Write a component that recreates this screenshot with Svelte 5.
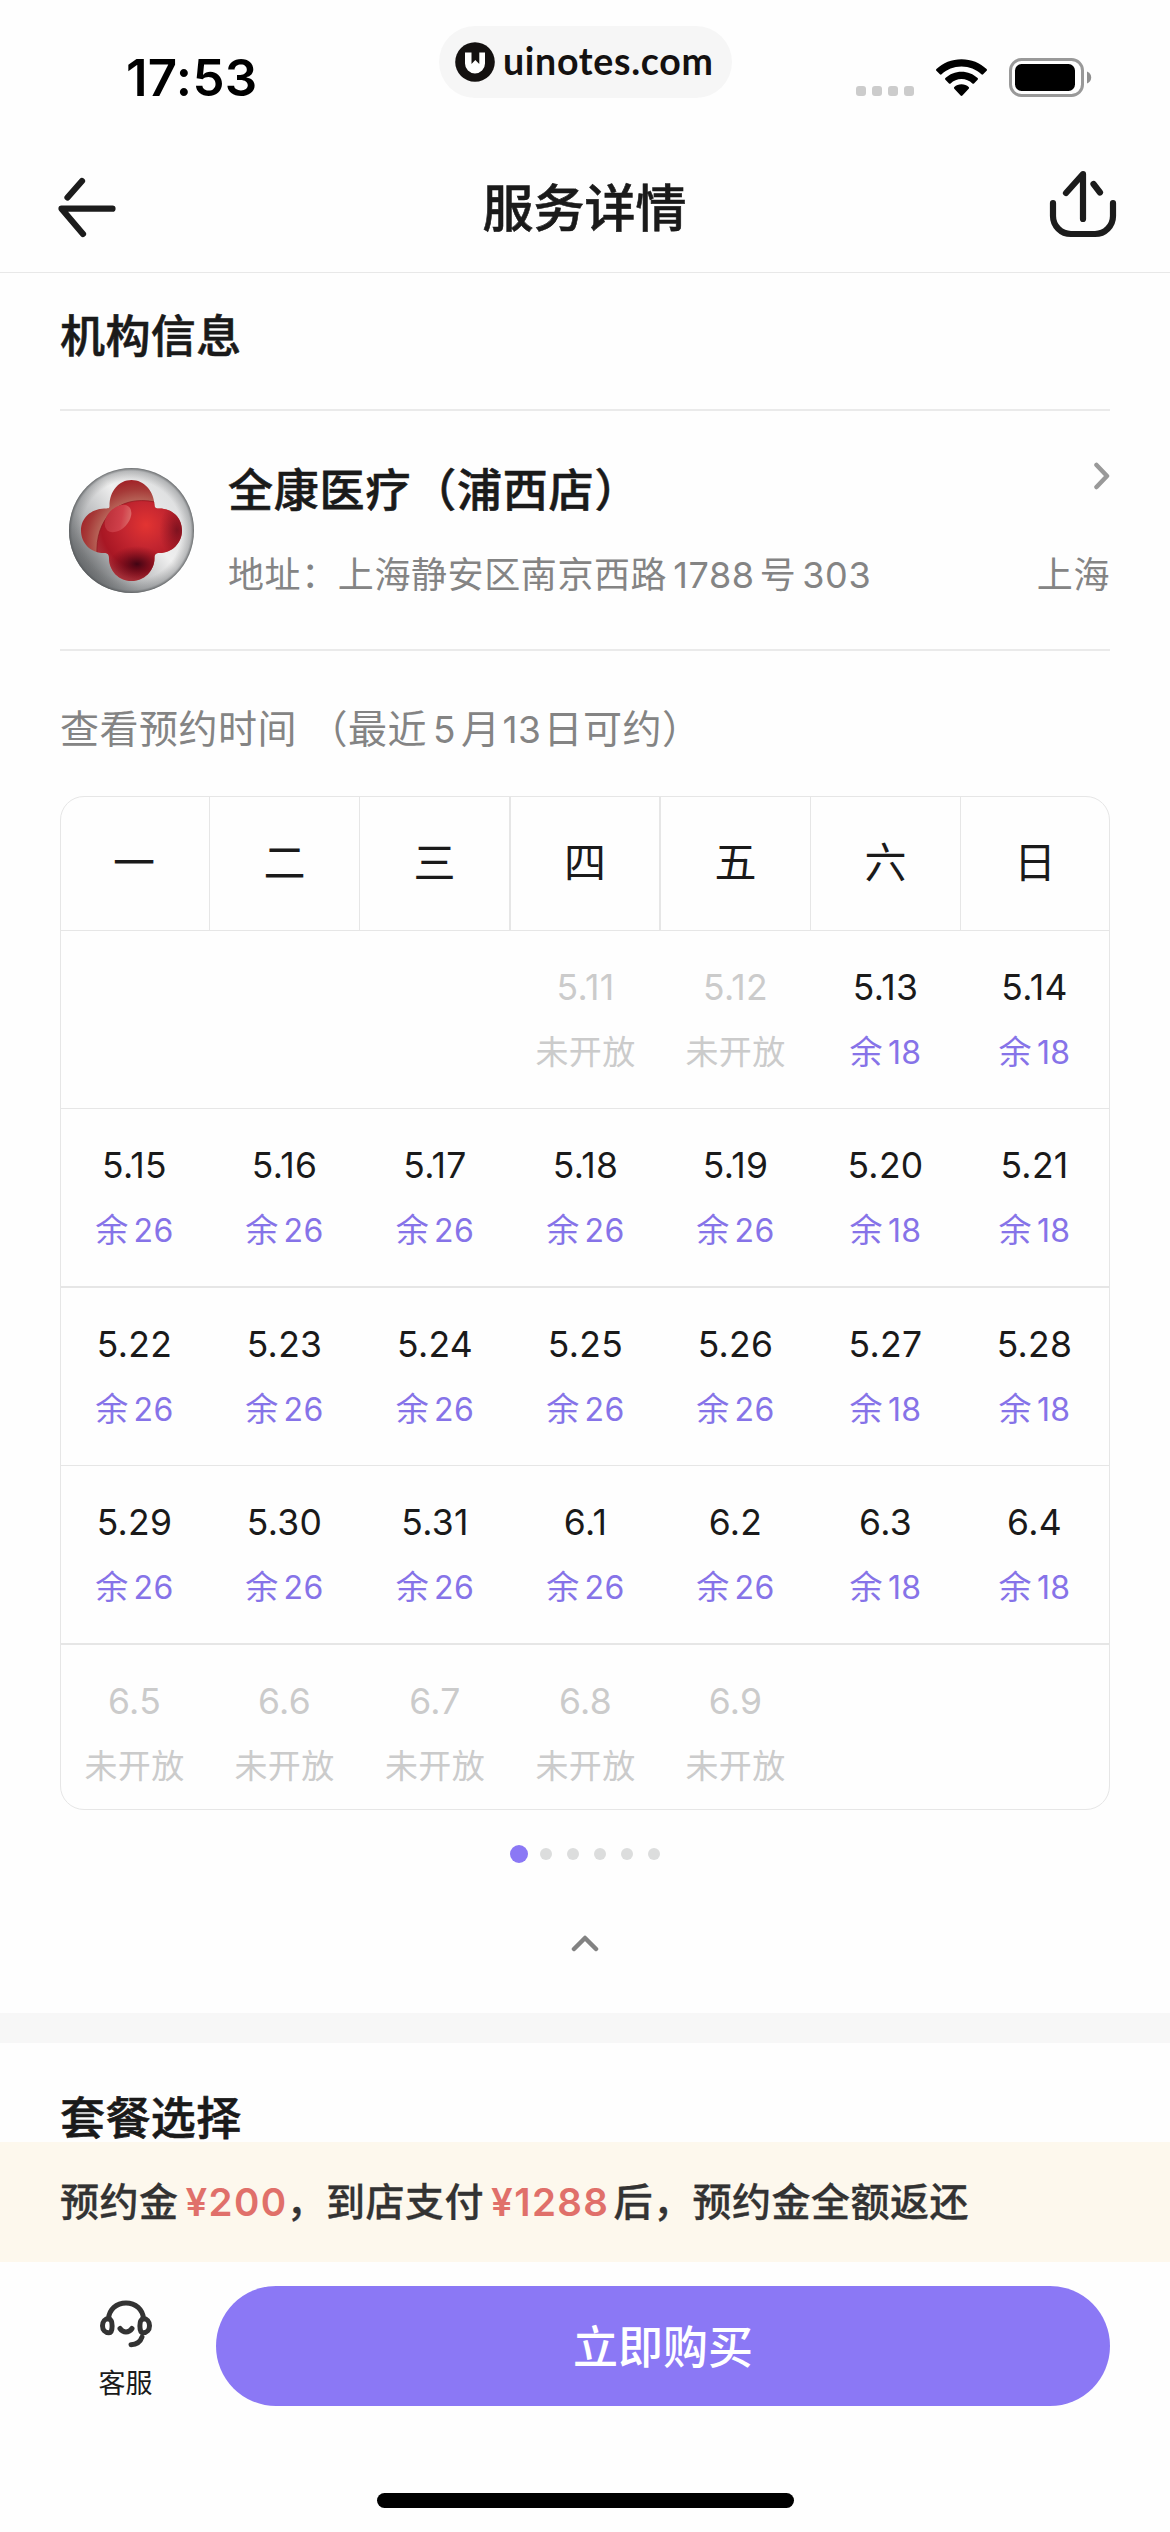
<script>
  const weekdays = ['一', '二', '三', '四', '五', '六', '日'];

  const closed = (date) => ({ date, left: null });
  const open = (date, left) => ({ date, left });

  const weeks = [
    [null, null, null, closed('5.11'), closed('5.12'), open('5.13', 18), open('5.14', 18)],
    [open('5.15', 26), open('5.16', 26), open('5.17', 26), open('5.18', 26), open('5.19', 26), open('5.20', 18), open('5.21', 18)],
    [open('5.22', 26), open('5.23', 26), open('5.24', 26), open('5.25', 26), open('5.26', 26), open('5.27', 18), open('5.28', 18)],
    [open('5.29', 26), open('5.30', 26), open('5.31', 26), open('6.1', 26), open('6.2', 26), open('6.3', 18), open('6.4', 18)],
    [closed('6.5'), closed('6.6'), closed('6.7'), closed('6.8'), closed('6.9'), null, null]
  ];

  const pages = [0, 1, 2, 3, 4, 5];
  let page = $state(0);
</script>

<div class="screen">
  <div class="status">
    <div class="time">17:53</div>
    <div class="pill">
      <svg class="mark" width="40" height="40" viewBox="0 0 40 40">
        <circle cx="20" cy="20" r="19.8" fill="#141110" />
        <path d="M10 10.500H16.500V22L20.300 18 24.300 22V10.500H30V21.500a10 10 0 0 1-20 0z" fill="#fff" />
      </svg>
      <span>uinotes.com</span>
    </div>
    <div class="signals">
      <div class="cell-dots"><i></i><i></i><i></i><i></i></div>
      <svg class="wifi" width="51" height="38" viewBox="0 0 51 38">
        <path d="M25.5 0.3C35.300 0.3 44.200 4 50.600 10.100c.5.5.5 1.200 0 1.700l-3.500 3.500c-.5.5-1.200.5-1.700 0C40.200 10.500 33.200 7.500 25.500 7.500S10.800 10.500 5.600 15.300c-.5.5-1.200.5-1.700 0L.4 11.800c-.5-.5-.5-1.200 0-1.700C6.800 4 15.700.3 25.500.3z" />
        <path d="M25.500 12.800c6.200 0 11.900 2.400 16.100 6.300.5.5.5 1.200 0 1.700l-3.600 3.600c-.4.500-1.100.5-1.600 0-2.900-2.600-6.700-4.300-10.900-4.300s-8 1.700-10.900 4.300c-.5.5-1.200.5-1.600 0l-3.600-3.600c-.5-.5-.5-1.200 0-1.700 4.200-3.900 9.900-6.300 16.100-6.300z" />
        <path d="M25.500 25.300c2.800 0 5.300 1 7.200 2.700.5.500.5 1.200 0 1.700l-6.300 6.800c-.5.600-1.300.6-1.800 0l-6.300-6.800c-.5-.5-.5-1.200 0-1.700 1.900-1.700 4.400-2.700 7.200-2.700z" />
      </svg>
      <svg class="battery" width="83" height="39" viewBox="0 0 83 39">
        <rect x="1.500" y="1.500" width="72" height="36" rx="11" fill="none" stroke="#999" stroke-width="3" />
        <rect x="6" y="6" width="60" height="27" rx="6.500" fill="#000" />
        <path d="M78 13.500c2.600 1 4.200 3.300 4.200 6s-1.600 5-4.200 6z" fill="#8f8f8f" />
      </svg>
    </div>
  </div>

  <header class="nav">
    <svg class="back" width="60" height="62" viewBox="0 0 60 62">
      <path d="M25 5L10.500 21.500M55.500 32.700H4.500L26 58" />
    </svg>
    <h1>服务详情</h1>
    <svg class="share" width="68" height="68" viewBox="0 0 68 68">
      <path d="M4 33v13a18 18 0 0 0 18 18h24a18 18 0 0 0 18-18V33M34 49V4L17 23M44.500 14L51 22.500" />
    </svg>
  </header>

  <section class="org">
    <h2>机构信息</h2>
    <div class="clinic">
      <svg class="avatar" width="125" height="125" viewBox="0 0 125 125">
        <defs>
          <linearGradient id="silver" x1="0.1" y1="0.85" x2="0.85" y2="0.25">
            <stop offset="0" stop-color="#55585a" />
            <stop offset="0.3" stop-color="#b2b4b6" />
            <stop offset="0.65" stop-color="#efefef" />
            <stop offset="1" stop-color="#dedfe0" />
          </linearGradient>
          <radialGradient id="rim">
            <stop offset="0.8" stop-color="#777" stop-opacity="0" />
            <stop offset="0.95" stop-color="#707376" stop-opacity="0.4" />
            <stop offset="1" stop-color="#55585a" stop-opacity="0.85" />
          </radialGradient>
          <radialGradient id="petal" gradientUnits="userSpaceOnUse" cx="70" cy="74" r="66">
            <stop offset="0.6" stop-color="#b9695c" />
            <stop offset="0.8" stop-color="#a63a38" />
            <stop offset="1" stop-color="#9f1820" />
          </radialGradient>
          <radialGradient id="ball" gradientUnits="userSpaceOnUse" cx="77" cy="57" r="56">
            <stop offset="0" stop-color="#e33432" />
            <stop offset="0.4" stop-color="#c42630" />
            <stop offset="0.8" stop-color="#a81724" />
            <stop offset="1" stop-color="#a93039" />
          </radialGradient>
          <radialGradient id="shade">
            <stop offset="0" stop-color="#2e0010" stop-opacity="0.85" />
            <stop offset="1" stop-color="#5c0010" stop-opacity="0" />
          </radialGradient>
          <linearGradient id="gloss" x1="0" y1="0" x2="1" y2="1">
            <stop offset="0" stop-color="#b52b35" />
            <stop offset="0.6" stop-color="#d0404a" />
            <stop offset="1" stop-color="#e08078" />
          </linearGradient>
          <clipPath id="clover">
            <path d="M40.500 38C40.500 23 50 12 62.500 12S85 23 85.500 37c0 3 2 3.500 5 3.500 13 0 22.500 9.500 22.500 22S103 85 90.500 85c-4 0-5 1.500-5 5 0 13-10.500 23-23 23S40 103 40 90c0-3.500-1-5-5-5C21.500 85 12 75 12 62.500S22 41 35 40.500c4 0 5.500 0 5.500-2.500z" />
          </clipPath>
        </defs>
        <circle cx="62.500" cy="62.500" r="62.500" fill="url(#silver)" />
        <circle cx="62.500" cy="62.500" r="62.500" fill="url(#rim)" />
        <g clip-path="url(#clover)">
          <rect width="125" height="125" fill="url(#petal)" />
          <path d="M28 87C26 52 48 26 86 34l28-10v48l-22 50H40z" fill="url(#ball)" />
          <ellipse cx="108" cy="62" rx="18" ry="27" fill="url(#shade)" opacity="0.5" />
          <ellipse cx="68" cy="96" rx="28" ry="18" fill="url(#shade)" />
          <path d="M28 87C26 52 48 26 86 34" fill="none" stroke="#8e1720" stroke-width="1" opacity="0.7" />
        </g>
        <ellipse cx="49" cy="50.500" rx="16" ry="10.500" transform="rotate(-47 49 50.500)" fill="url(#gloss)" />
      </svg>
      <div class="info">
        <div class="line">
          <h3>全康医疗（浦西店）</h3>
          <svg class="go" width="16" height="28" viewBox="0 0 16 28">
            <path d="M2.500 3L13 14 2.500 25" />
          </svg>
        </div>
        <div class="line address">
          <p>地址：上海静安区南京西路<span class="num">1788</span>号<span class="num">303</span></p>
          <p>上海</p>
        </div>
      </div>
    </div>

    <p class="hint">查看预约时间 （最近<span class="num">5</span>月<span class="num tight">13</span>日可约）</p>

    <div class="calendar">
      <div class="week head">
        {#each weekdays as name}
          <div class="name">{name}</div>
        {/each}
      </div>
      {#each weeks as week}
        <div class="week">
          {#each week as day}
            <div class="day" class:off={day && day.left === null}>
              {#if day}
                <div class="date">{day.date}</div>
                {#if day.left === null}
                  <div class="state">未开放</div>
                {:else}
                  <div class="state">余<span>{day.left}</span></div>
                {/if}
              {/if}
            </div>
          {/each}
        </div>
      {/each}
    </div>

    <div class="pager">
      {#each pages as p}
        <i class:active={p === page}></i>
      {/each}
    </div>

    <svg class="fold" width="28" height="18" viewBox="0 0 28 18">
      <path d="M3 15L14 4l11 11" />
    </svg>
  </section>

  <div class="band"></div>

  <section class="package">
    <h2>套餐选择</h2>
  </section>

  <div class="notice">
    <p>预约金<span class="price">¥200</span>，到店支付<span class="price">¥1288</span>后，预约金全额返还</p>
  </div>

  <footer>
    <div class="service">
      <svg width="52" height="48" viewBox="0 0 52 48">
        <path d="M8.500 19C9 9.500 16.500 3 26 3s17 6.500 17.500 16" />
        <path d="M8.800 18.500c2.700 1 3.300 3.500 3.300 7.500s-1 6.800-3.100 6.800c-3.800 0-6.500-2.800-6.500-7s2.600-7.300 6.300-7.300zM43.200 18.500c-2.700 1-3.300 3.500-3.300 7.500s1 6.800 3.100 6.800c3.800 0 6.500-2.800 6.500-7s-2.600-7.300-6.300-7.300z" />
        <path d="M20 28.500c3 4.500 9 4.500 12 0M42 37c-1.500 4.500-5.500 7.500-11 7.700" />
      </svg>
      <span>客服</span>
    </div>
    <button>立即购买</button>
  </footer>

  <div class="home"></div>
</div>

<style>
  :global(body) {
    background: #fefefe;
  }

  .screen {
    width: 1170px;
    height: 2532px;
    box-sizing: border-box;
    display: flex;
    flex-direction: column;
    overflow: hidden;
    background: #fefefe;
    color: #1a1a1a;
    font-family: Inter, 'Noto Sans CJK SC', sans-serif;
  }

  h1, h2, h3, p {
    margin: 0;
    font-weight: 500;
    white-space: nowrap;
  }

  h1, h2, h3 {
    -webkit-text-stroke: 0.6px currentColor;
  }

  svg {
    display: block;
    flex: none;
  }

  .status {
    height: 152px;
    display: grid;
    grid-template-columns: 439px 293px 1fr;
    align-items: start;
    color: #000;
  }

  .time {
    padding: 48px 0 0 126px;
    font-size: 51px;
    line-height: 60px;
    font-weight: 600;
    letter-spacing: 0.3px;
  }

  .pill {
    height: 72px;
    margin-top: 26px;
    box-sizing: border-box;
    padding-left: 16px;
    display: flex;
    align-items: center;
    gap: 8px;
    border-radius: 36px;
    background: #f6f6f6;
    color: #141110;
    font: 700 37.500px/72px Lato, sans-serif;
    letter-spacing: 0.7px;
  }

  .pill span {
    margin-top: -2px;
  }

  .signals {
    display: flex;
    padding: 58px 0 0 124px;
  }

  .cell-dots {
    display: flex;
    gap: 6px;
    padding-top: 28px;
    margin-right: 22px;
  }

  .cell-dots i {
    width: 10px;
    height: 10px;
    border-radius: 3px;
    background: #ccc;
  }

  .wifi {
    margin: 1px 22px 0 0;
  }

  .nav {
    height: 121px;
    box-sizing: border-box;
    display: flex;
    justify-content: space-between;
    align-items: flex-start;
    padding: 18px 53px 0 57px;
    border-bottom: 1px solid #e8e8e8;
  }

  .nav svg path,
  .service path {
    fill: none;
    stroke: #1c1c1c;
    stroke-width: 6.2;
    stroke-linecap: round;
    stroke-linejoin: round;
  }

  .back {
    margin-top: 6px;
  }

  h1 {
    font-size: 51px;
    line-height: 74px;
    padding: 2px 0 0 3px;
  }

  .org {
    height: 1740px;
    padding: 0 60px;
    display: flex;
    flex-direction: column;
  }

  h2 {
    font-size: 45px;
    line-height: 66px;
    letter-spacing: 0.4px;
  }

  .org h2 {
    height: 105px;
    padding-top: 31px;
    border-bottom: 2px solid #eaeaea;
  }

  .clinic {
    height: 181px;
    padding: 57px 0 0 9px;
    border-bottom: 2px solid #eaeaea;
    display: flex;
    gap: 34px;
  }

  .info {
    flex: 1;
  }

  .line {
    display: flex;
    justify-content: space-between;
    align-items: flex-start;
  }

  h3 {
    font-size: 45px;
    line-height: 66px;
    letter-spacing: 0.8px;
    margin-top: -10px;
  }

  .go {
    margin-top: -6px;
  }

  .go path,
  .fold path {
    fill: none;
    stroke: #999;
    stroke-width: 4.5;
    stroke-linecap: round;
    stroke-linejoin: round;
  }

  .address {
    margin-top: 24px;
    color: #848484;
  }

  .address p {
    font-size: 36px;
    line-height: 54px;
    font-weight: 400;
    letter-spacing: 0.6px;
  }

  .num {
    margin: 0 5px 0 6px;
  }

  .hint {
    margin-top: 49px;
    font-size: 39px;
    line-height: 58px;
    font-weight: 400;
    letter-spacing: 0.5px;
    color: #848484;
  }

  .hint .num {
    font-size: 37px;
  }

  .hint .tight {
    margin: 0 2px;
  }

  .calendar {
    height: 1014px;
    box-sizing: border-box;
    margin-top: 37px;
    border: 1px solid #e6e6e6;
    border-radius: 24px;
    overflow: hidden;
  }

  .week {
    height: 177px;
    display: grid;
    grid-template-columns: 149px 150px 151px 150px 150px 150px 148px;
    border-bottom: 1px solid #e6e6e6;
  }

  .week:nth-child(odd) {
    border-bottom-width: 2px;
  }

  .week.head {
    height: 133px;
    border-bottom-width: 1px;
  }

  .week:last-child {
    border-bottom: 0;
  }

  .name {
    border-right: 1px solid #e6e6e6;
    font-size: 42px;
    line-height: 132px;
    text-align: center;
  }

  .name:first-child,
  .day:first-child {
    padding-right: 2px;
  }

  .name:last-child {
    border-right: 0;
  }

  .name:nth-child(3),
  .name:nth-child(4) {
    border-right-width: 2px;
  }

  .day {
    padding-top: 33px;
    padding-right: 1px;
    text-align: center;
  }

  .date {
    font-size: 35.500px;
    line-height: 48px;
    letter-spacing: 0.3px;
  }

  .state {
    margin-top: 16px;
    font-size: 33px;
    line-height: 48px;
    letter-spacing: 0.4px;
    color: #8673e8;
  }

  .state span {
    margin-left: 5px;
    font-size: 32px;
    letter-spacing: 0.4px;
  }

  .off .date,
  .off .state {
    color: #cbcbcb;
  }

  .pager {
    margin-top: 35px;
    height: 18px;
    display: flex;
    justify-content: center;
    align-items: center;
    gap: 15px;
  }

  .pager i {
    width: 12px;
    height: 12px;
    border-radius: 50%;
    background: #dcdddd;
  }

  .pager .active {
    width: 18px;
    height: 18px;
    margin-right: -3px;
    background: #8b78f5;
  }

  .fold {
    margin: 71px auto 0;
  }

  .fold path {
    stroke: #828282;
  }

  .band {
    height: 30px;
    background: #f7f7f7;
  }

  .package {
    height: 99px;
    box-sizing: border-box;
    padding: 53px 60px 0;
  }

  .package h2 {
    line-height: 45px;
  }

  .notice {
    height: 120px;
    padding: 0 60px;
    background: #fdf8ed;
    color: #333;
  }

  .notice p {
    font-size: 39px;
    line-height: 119px;
    letter-spacing: 0.5px;
    -webkit-text-stroke: 0.3px currentColor;
  }

  .price {
    margin: 0 -1px 0 7px;
    font-size: 38.500px;
    font-weight: 600;
    letter-spacing: 1.400px;
    -webkit-text-stroke: 0;
    color: #e0706a;
  }

  .price:last-child {
    margin-right: 4px;
  }

  footer {
    height: 231px;
    box-sizing: border-box;
    padding: 24px 60px 0;
    display: flex;
  }

  .service {
    width: 131px;
    padding: 14px 25px 0 0;
    box-sizing: content-box;
    display: flex;
    flex-direction: column;
    align-items: center;
    font-size: 27px;
    line-height: 40px;
  }

  .service span {
    margin-top: 16px;
  }

  .service path {
    stroke: #333;
    stroke-width: 5;
  }

  button {
    flex: none;
    width: 894px;
    height: 120px;
    border: 0;
    padding: 0 0 3px;
    border-radius: 60px;
    background: #8b78f5;
    color: #fff;
    font: 500 45px/117px 'Noto Sans CJK SC', sans-serif;
  }

  .home {
    width: 417px;
    height: 15px;
    margin: 0 auto;
    border-radius: 8px;
    background: #000;
  }
</style>
